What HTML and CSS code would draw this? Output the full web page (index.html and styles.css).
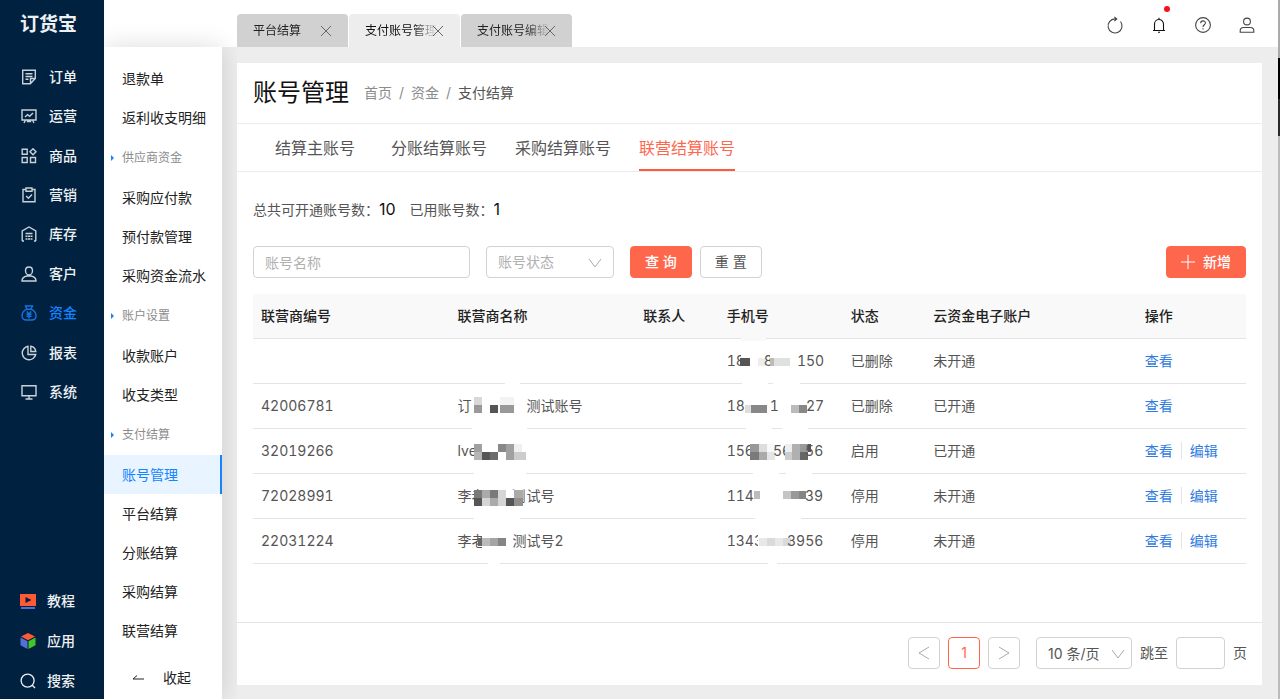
FILE: index.html
```html
<!DOCTYPE html>
<html lang="zh-CN">
<head>
    <meta charset="UTF-8">
    <meta name="viewport" content="width=device-width, initial-scale=1.0">
    <title>账号管理</title>
    <link rel="stylesheet" href="styles.css">
</head>
<body>
    <div class="app">
        <aside class="sidebar">
            <a class="logo" href="#">订货宝</a>
            <ul class="nav">
                <li><a href="#"><svg viewBox="0 0 16 16"><path d="M14.3 9.5V1.2H1.7v13.6h7.6zM14.3 9.5H9.5v5M4.5 4.7h7M4.5 7.5h7M4.5 10.3h3"/></svg>订单</a></li>
                <li><a href="#"><svg viewBox="0 0 16 16"><path d="M1 2h14v10H1zM4 9l2.6-2.4 2 1.6L12 5M4.5 12 3 15M11.5 12l1.5 3M6.5 12v1.5h3V12"/></svg>运营</a></li>
                <li><a href="#"><svg viewBox="0 0 16 16"><path d="M1.2 1.2h5v5h-5zM1.2 9.5h5v5h-5zM9.5 9.5h5v5h-5zM12 .8l3 3-3 3-3-3z"/></svg>商品</a></li>
                <li><a href="#"><svg viewBox="0 0 16 16"><path d="M5 2.5H2v12.3h12V2.5h-3M5 1h6v3.2H5zM5.2 9l2.2 2.2L11 7.5"/></svg>营销</a></li>
                <li><a href="#"><svg viewBox="0 0 16 16"><path d="M1.2 15V5L8 1l6.800 4v10M1 15h2M13 15h2M4.500 7.500h7M4.500 10.300h2M7 10.300h2M9.500 10.300h2M4.500 13h2M7 13h2M9.500 13h2"/></svg>库存</a></li>
                <li><a href="#"><svg viewBox="0 0 16 16"><path d="M8 1c2.200 0 3.500 1.600 3.500 3.700S10 9 8 9 4.500 6.800 4.500 4.700 5.800 1 8 1zM1 15c0-3 2.200-4.500 5-5h4c2.800.5 5 2 5 5z"/></svg>客户</a></li>
                <li class="active"><a href="#"><svg viewBox="0 0 16 16"><path d="M4.500 1h7l-1.500 3.200C13 5.500 15 8 15 10.700c0 3-2 4.300-4.500 4.300h-5C3 15 1 13.700 1 10.700 1 8 3 5.500 6 4.200zM6 4.200h4M5.800 6.500 8 9l2.200-2.500M5.500 9.200h5M5.500 11.300h5M8 9v4.500"/></svg>资金</a></li>
                <li><a href="#"><svg viewBox="0 0 16 16"><path d="M7 1.300a6.800 6.800 0 1 0 7.700 8.200H7zM9.800 1.200a6 6 0 0 1 5 5.300h-5z"/></svg>报表</a></li>
                <li><a href="#"><svg viewBox="0 0 16 16"><path d="M1 1.800h14v10H1zM8 12v2.500M4.500 15h7"/></svg>系统</a></li>
            </ul>
            <ul class="tools">
                <li><a href="#"><svg class="solid" viewBox="0 0 16 16"><path fill="#ff5a36" d="M0 1h16v12H0z"/><path fill="#00213f" d="m5.500 4 6 3-6 3z"/><path fill="#4e6fd0" d="M1 14h14v2H1z"/></svg>教程</a></li>
                <li><a href="#"><svg class="solid" viewBox="0 0 16 16"><path fill="#ff5a36" d="m8 0 7 3.500-7 3.700-7-3.700z"/><path fill="#5470d8" d="m.5 4.500 7 3.700V16l-7-3.800z"/><path fill="#43c428" d="m15.500 4.500-7 3.700V16l7-3.800z"/></svg>应用</a></li>
                <li><a href="#"><svg viewBox="0 0 16 16"><circle cx="7.600" cy="7.600" r="6.500"/><path d="m12.300 12.300 2.700 2.700"/></svg>搜索</a></li>
            </ul>
        </aside>

        <aside class="submenu">
            <ul>
                <li><a href="#">退款单</a></li>
                <li><a href="#">返利收支明细</a></li>
                <li class="group">供应商资金</li>
                <li><a href="#">采购应付款</a></li>
                <li><a href="#">预付款管理</a></li>
                <li><a href="#">采购资金流水</a></li>
                <li class="group">账户设置</li>
                <li><a href="#">收款账户</a></li>
                <li><a href="#">收支类型</a></li>
                <li class="group">支付结算</li>
                <li class="active"><a href="#">账号管理</a></li>
                <li><a href="#">平台结算</a></li>
                <li><a href="#">分账结算</a></li>
                <li><a href="#">采购结算</a></li>
                <li><a href="#">联营结算</a></li>
            </ul>
            <button type="button" class="collapse"><svg viewBox="0 0 12 12"><path d="M12 7H1l4-3.500"/></svg>收起</button>
        </aside>

        <div class="main">
            <header class="topbar">
                <div class="page-tabs">
                    <div class="page-tab"><a href="#">平台结算</a><button type="button" aria-label="关闭"><svg viewBox="0 0 12 12"><path d="m1 1 10 10M11 1 1 11"/></svg></button></div>
                    <div class="page-tab current"><a href="#">支付账号管理</a><button type="button" aria-label="关闭"><svg viewBox="0 0 12 12"><path d="m1 1 10 10M11 1 1 11"/></svg></button></div>
                    <div class="page-tab"><a href="#">支付账号编辑</a><button type="button" aria-label="关闭"><svg viewBox="0 0 12 12"><path d="m1 1 10 10M11 1 1 11"/></svg></button></div>
                </div>
                <div class="actions">
                    <button type="button" aria-label="刷新"><svg viewBox="0 0 16 16"><path d="M13.500 4.500A7 7 0 1 1 8 1.900h1.500M7.300-.2l2.500 2.100-2.500 2.200"/></svg></button>
                    <button type="button" class="bell" aria-label="消息"><svg viewBox="0 0 16 16"><path d="M3.500 13.500V7a4.500 4.500 0 0 1 9 0v6.500M2 13.500h12M8 .8v1.700M7 15.300h2"/></svg><span class="dot"></span></button>
                    <button type="button" aria-label="帮助"><svg viewBox="0 0 16 16"><circle cx="8" cy="8" r="7.400"/><path d="M5.700 6.300C5.700 3 10.400 3.200 10.400 6c0 1.800-2.400 1.800-2.400 4M8 11.300v1.200"/></svg></button>
                    <button type="button" aria-label="我的"><svg viewBox="0 0 16 16"><circle cx="8" cy="4.500" r="3.400"/><path d="M1.200 15.200v-1.500c0-2 1.500-3.200 3.500-3.200h6.600c2 0 3.500 1.200 3.500 3.200v1.500z"/></svg></button>
                </div>
            </header>

            <main class="card">
                <div class="card-head">
                    <h1>账号管理</h1>
                    <nav class="breadcrumb"><a href="#">首页</a><span>/</span><a href="#">资金</a><span>/</span><b>支付结算</b></nav>
                </div>
                <nav class="tabs">
                    <a href="#">结算主账号</a>
                    <a href="#">分账结算账号</a>
                    <a href="#">采购结算账号</a>
                    <a href="#" class="active">联营结算账号</a>
                </nav>
                <div class="content">
                    <p class="summary"><span>总共可开通账号数：<b>10</b></span><span>已用账号数：<b>1</b></span></p>

                    <form class="filter">
                        <input class="field name" type="text" placeholder="账号名称" aria-label="账号名称">
                        <div class="select status">
                            <select class="field" aria-label="账号状态">
                                <option value="">账号状态</option>
                                <option>启用</option>
                                <option>停用</option>
                                <option>已删除</option>
                            </select>
                            <svg viewBox="0 0 14 14"><path d="m1 3 6 8 6-8"/></svg>
                        </div>
                        <button type="button" class="btn primary">查 询</button>
                        <button type="button" class="btn">重 置</button>
                        <button type="button" class="btn primary add"><svg viewBox="0 0 14 14"><path d="M7 0v14M0 7h14"/></svg>新增</button>
                    </form>

                    <table>
                        <colgroup>
                            <col class="c-code"><col class="c-name"><col class="c-contact"><col class="c-phone"><col class="c-state"><col class="c-fund"><col class="c-action">
                        </colgroup>
                        <thead>
                            <tr><th>联营商编号</th><th>联营商名称</th><th>联系人</th><th>手机号</th><th>状态</th><th>云资金电子账户</th><th>操作</th></tr>
                        </thead>
                        <tbody>
                            <tr>
                                <td></td>
                                <td></td>
                                <td></td>
                                <td>18<svg class="mask" width="19" height="16"><path fill="#fff" d="M-4-6h24v28H-4zM-3 28h26v4H-3z"/><path fill="#f9f9f9" d="M-4-17h25v4H-4z"/><path fill="#555" d="M-5 4h10v8H-5z"/><path fill="#ededed" d="M13 4h7v8h-7z"/></svg>8<svg class="mask" width="24" height="16"><path fill="#fff" d="M-3-6h26v28H-3zM0 28h27v4H0z"/><path fill="#bbb" d="M-3 4h4v8h-4z"/><path fill="#e0e0e0" d="M1 4h16v8H1z"/></svg>150</td>
                                <td>已删除</td>
                                <td>未开通</td>
                                <td><a href="#">查看</a></td>
                            </tr>
                            <tr>
                                <td>42006781</td>
                                <td>订<svg class="mask" width="55" height="16"><path fill="#fff" d="M0 28h55v4H0zM33-17h15v4H33z"/><path fill="#d8d8d8" d="M2-2h8v8H2z"/><path fill="#999" d="M2 6h8v8H2zM28 6h14v8H28z"/><path fill="#555" d="M18 6h8v8h-8z"/><path fill="#f3f3f3" d="M28-2h14v8H28z"/></svg>测试账号</td>
                                <td></td>
                                <td>18<svg class="mask" width="25" height="16"><path fill="#fff" d="M1 28h26v4H1z"/><path fill="#ddd" d="M0 6h6v8H0z"/><path fill="#888" d="M6 6h16v8H6z"/></svg>1<svg class="mask" width="27" height="16"><path fill="#fff" d="M3 28h26v4H3z"/><path fill="#bbb" d="M12 6h8v8h-8z"/><path fill="#888" d="M20 6h8v8h-8z"/></svg>27</td>
                                <td>已删除</td>
                                <td>已开通</td>
                                <td><a href="#">查看</a></td>
                            </tr>
                            <tr>
                                <td>32019266</td>
                                <td>lve<svg class="mask" width="50" height="16"><path fill="#fff" d="M-3 0h52v16H-3zM-3 28h52v4H-3z"/><path fill="#a0a0a0" d="M-3 0h8v8h-8zM29 0h8v16h-8z"/><path fill="#b5b5b5" d="M-3 8h8v8h-8z"/><path fill="#555" d="M5 8h8v8H5z"/><path fill="#6c6c6c" d="M13 8h8v8h-8z"/><path fill="#888" d="M21 0h8v8h-8z"/><path fill="#f0f0f0" d="M37 0h8v8h-8z"/><path fill="#ccc" d="M37 8h12v8H37z"/></svg></td>
                                <td></td>
                                <td>156<svg class="mask" width="19" height="16"><path fill="#fff" d="M-1 28h26v4H-1z"/><path fill="#999" d="M-4 0h9v8h-9z"/><path fill="#7a7a7a" d="M-4 8h9v8h-9z"/><path fill="#ddd" d="M5 0h8v8H5z"/><path fill="#aaa" d="M5 8h8v8H5z"/><path fill="#f8f8f8" d="M13 0h8v8h-8z"/><path fill="#e5e5e5" d="M13 8h8v8h-8z"/></svg>56<svg class="mask" width="14" height="16"><path fill="#fff" d="M-5 28h26v4H-5z"/><path fill="#eee" d="M-6 0h7v8h-7z"/><path fill="#ccc" d="M-6 8h7v8h-7z"/><path fill="#b0b0b0" d="M1 0h8v16H1z"/><path fill="#999" d="M9 0h8v8H9z"/><path fill="#666" d="M9 8h8v8H9z"/><path fill="#555" d="M17 0h3v8h-3z"/></svg>56</td>
                                <td>启用</td>
                                <td>已开通</td>
                                <td><a href="#">查看</a><a href="#">编辑</a></td>
                            </tr>
                            <tr>
                                <td>72028991</td>
                                <td>李老<svg class="mask" width="26" height="16"><path fill="#fff" d="M-12 1h36v16h-36zM-12 28h46v4h-46z"/><path fill="#7a7a7a" d="M-12 1h8v8h-8zM4 1h8v8H4z"/><path fill="#aaa" d="M-4 1h8v8h-8zM4 9h8v8H4z"/><path fill="#d5d5d5" d="M12 1h8v16h-8zM-4 9h8v8h-8z"/><path fill="#555" d="M-12 9h8v8h-8z"/></svg>测<svg class="mask" width="1" height="16"><path fill="#fff" d="M-20 1h8v8h-8z"/><path fill="#aaa" d="M-12 1h9v8h-9z"/><path fill="#555" d="M-20 9h8v8h-8z"/><path fill="#909090" d="M-12 9h9v8h-9z"/></svg>试号</td>
                                <td></td>
                                <td>114<svg class="mask" width="51" height="16"><path fill="#fff" d="M1 28h46v4H1z"/><path fill="#bbb" d="M0 2h6v8H0z"/><path fill="#c5c5c5" d="M29 2h8v8h-8z"/><path fill="#999" d="M37 2h8v8h-8z"/><path fill="#858585" d="M45 2h7v8h-7z"/></svg>39</td>
                                <td>停用</td>
                                <td>未开通</td>
                                <td><a href="#">查看</a><a href="#">编辑</a></td>
                            </tr>
                            <tr>
                                <td>22031224</td>
                                <td>李老<svg class="mask" width="27" height="16"><path fill="#fff" d="M-4 0h24v16H-4zM2 28h12v4H2z"/><path fill="#666" d="M-8 4h4v8h-4z"/><path fill="#bbb" d="M-4 4h8v8h-8z"/><path fill="#a5a5a5" d="M4 4h8v8H4z"/><path fill="#858585" d="M12 4h8v8h-8z"/></svg>测试号2</td>
                                <td></td>
                                <td>1343<svg class="mask" width="24" height="16"><path fill="#fff" d="M-5 0h32v16H-5zM5 28h9v4H5z"/><path fill="#e8e8e8" d="M-4 4h8v8h-8zM12 4h8v8h-8z"/><path fill="#dadada" d="M4 4h8v8H4zM20 4h8v8h-8z"/></svg>3956</td>
                                <td>停用</td>
                                <td>未开通</td>
                                <td><a href="#">查看</a><a href="#">编辑</a></td>
                            </tr>
                        </tbody>
                    </table>
                </div>
                <footer class="pager">
                    <button type="button" class="page" aria-label="上一页"><svg viewBox="0 0 14 14"><path d="M12 1 2 7l10 6"/></svg></button>
                    <button type="button" class="page current">1</button>
                    <button type="button" class="page" aria-label="下一页"><svg viewBox="0 0 14 14"><path d="m2 1 10 6-10 6"/></svg></button>
                    <div class="select size">
                        <select class="field" aria-label="每页条数">
                            <option>10 条/页</option>
                            <option>20 条/页</option>
                            <option>50 条/页</option>
                        </select>
                        <svg viewBox="0 0 14 14"><path d="m1 3 6 8 6-8"/></svg>
                    </div>
                    <label for="jump">跳至</label>
                    <input class="field jump" type="text" id="jump">
                    <span>页</span>
                </footer>
            </main>
        </div>
        <div class="edge"></div>
    </div>
</body>
</html>
```
FILE: styles.css
```css
* {
    box-sizing: border-box;
}
body {
    margin: 0;
    font-family: Inter, "Noto Sans CJK SC", sans-serif;
    font-size: 14px;
    line-height: 20px;
    color: #555;
    background: #ededed;
}
ul, h1, p {
    margin: 0;
    padding: 0;
    list-style: none;
}
a {
    color: inherit;
    text-decoration: none;
}
button, input, select {
    font: inherit;
    color: inherit;
}
button {
    padding: 0;
    border: none;
    background: none;
    cursor: pointer;
}
svg {
    width: 16px;
    height: 16px;
    flex: none;
    fill: none;
    stroke: currentColor;
}
.app {
    display: flex;
    min-height: 100vh;
}

/* dark sidebar */
.sidebar {
    display: flex;
    flex-direction: column;
    flex: none;
    width: 104px;
    color: #eef1f4;
    background: #00213f;
}
.logo {
    padding: 15px 0 22px 20px;
    font-size: 19px;
    font-weight: 700;
}
.nav {
    display: flex;
    flex-direction: column;
    height: 355px;
}
.nav li {
    flex: 1;
}
.nav a, .tools a {
    display: flex;
    align-items: center;
    height: 100%;
    padding-left: 21px;
    gap: 12px;
    font-weight: 500;
}
.nav svg {
    stroke-width: 1.4;
    opacity: .85;
}
.nav .active {
    color: #1683ff;
}
.tools {
    display: flex;
    flex-direction: column;
    gap: 4px;
    margin-top: auto;
}
.tools li {
    height: 36px;
}
.tools a {
    padding-left: 20px;
    gap: 11px;
}
.tools svg {
    stroke-width: 1.3;
}
.tools .solid {
    stroke: none;
}

/* second level menu */
.submenu {
    position: relative;
    z-index: 1;
    display: flex;
    flex-direction: column;
    justify-content: space-between;
    flex: none;
    width: 118px;
    margin-top: 47px;
    padding-top: 12px;
    color: #222;
    background: #fff;
    box-shadow: 0 0 24px rgba(0, 0, 0, .14);
    clip-path: inset(-30px -15px 0 0);
}
.submenu li {
    height: 39px;
    padding-left: 18px;
    line-height: 39px;
    white-space: nowrap;
}
.submenu a {
    display: block;
}
.submenu .group {
    display: flex;
    align-items: center;
    gap: 8px;
    height: 41px;
    padding-left: 7px;
    font-size: 12px;
    color: #8c8c8c;
}
.group::before {
    content: "";
    border: 3px solid transparent;
    border-left-color: #1683ff;
    border-right: none;
}
.submenu .active {
    color: #1683ff;
    background: #e8f4ff;
    border-right: 2px solid #1683ff;
}
.collapse {
    display: flex;
    align-items: center;
    gap: 19px;
    height: 42px;
    padding-left: 28px;
}
.collapse svg {
    width: 12px;
    height: 12px;
}

/* top bar */
.main {
    display: flex;
    flex-direction: column;
    flex: 1;
    min-width: 0;
    margin-left: -118px;
}
.topbar {
    display: flex;
    justify-content: space-between;
    align-items: flex-end;
    height: 47px;
    padding: 0 23px 0 133px;
    background: #fff;
}
.page-tabs {
    display: flex;
    gap: 1px;
}
.page-tab {
    display: flex;
    align-items: center;
    width: 111px;
    height: 33px;
    padding: 0 16px;
    font-size: 12px;
    color: #222;
    background: #d1d1d1;
    border-radius: 4px 4px 0 0;
}
.page-tab.current {
    color: #111;
    background: #ededed;
}
.page-tab a {
    flex: 1;
    overflow: hidden;
    white-space: nowrap;
    -webkit-mask-image: linear-gradient(90deg, #000 48px, transparent 72px);
    mask-image: linear-gradient(90deg, #000 48px, transparent 72px);
}
.page-tab button {
    display: flex;
    margin-left: -4px;
    color: #666;
}
.page-tab svg {
    width: 12px;
    height: 12px;
}
.actions {
    display: flex;
    gap: 28px;
    height: 100%;
    align-items: center;
    color: #444;
}
.actions button {
    position: relative;
    display: flex;
    padding-top: 2px;
}
.actions svg {
    stroke-width: 1.1;
    overflow: visible;
}
.actions .bell {
    color: #111;
}
.dot {
    position: absolute;
    top: -9px;
    right: -3px;
    width: 6px;
    height: 6px;
    border-radius: 50%;
    background: #f5111d;
}

/* card */
.card {
    display: flex;
    flex-direction: column;
    flex: 1;
    margin: 16px 16px 14px 133px;
    background: #fff;
}
.card-head {
    display: flex;
    align-items: center;
    gap: 15px;
    height: 61px;
    padding: 0 16px;
    border-bottom: 1px solid #ececec;
}
h1 {
    font-size: 24px;
    font-weight: 400;
    line-height: 32px;
    color: #111;
}
.breadcrumb {
    display: flex;
    gap: 7px;
    color: #8c8c8c;
}
.breadcrumb b {
    font-weight: 400;
    color: #555;
}
.tabs {
    display: flex;
    gap: 28px;
    height: 48px;
    padding: 0 30px;
    border-bottom: 1px solid #ececec;
    font-size: 16px;
    line-height: 48px;
    text-align: center;
}
.tabs a {
    min-width: 96px;
}
.tabs .active {
    color: #ff674d;
    border-bottom: 2px solid #ff5a3c;
}
.content {
    flex: 1;
    padding: 27px 16px;
}
.summary {
    display: flex;
    gap: 14px;
}
.summary b {
    font-size: 16px;
    font-weight: 400;
    color: #111;
}
.filter {
    display: flex;
    gap: 8px;
    margin: 26px 0 16px;
}
.field {
    width: 100%;
    height: 32px;
    padding: 0 11px;
    border: 1px solid #d2d2d2;
    border-radius: 4px;
    background: #fff;
    appearance: none;
}
.field::placeholder {
    color: #b0b0b0;
    opacity: 1;
}
.name {
    width: 217px;
    margin-right: 8px;
}
.select {
    position: relative;
}
.select svg {
    position: absolute;
    top: 10px;
    right: 12px;
    width: 14px;
    height: 14px;
    color: #aaa;
    pointer-events: none;
}
.status {
    width: 128px;
    margin-right: 8px;
}
.status select {
    color: #b0b0b0;
}
.btn {
    height: 32px;
    padding: 0 14px;
    border: 1px solid #d2d2d2;
    border-radius: 4px;
    background: #fff;
}
.btn.primary {
    color: #fff;
    font-weight: 500;
    background: #ff674d;
    border-color: #ff674d;
}
.btn.add {
    display: flex;
    align-items: center;
    gap: 8px;
    margin-left: auto;
}
.btn svg {
    width: 14px;
    height: 14px;
}

table {
    width: 100%;
    table-layout: fixed;
    border-spacing: 0;
}
tbody {
    font-variant-numeric: tabular-nums;
}
.c-code { width: 19.8%; }
.c-name { width: 18.7%; }
.c-contact { width: 8.4%; }
.c-phone { width: 12.5%; }
.c-state { width: 8.3%; }
.c-fund { width: 21.3%; }
.c-action { width: 11%; }
th, td {
    height: 45px;
    padding: 0 8px;
    border-bottom: 1px solid #e4e4e4;
    text-align: left;
    white-space: nowrap;
}
th {
    font-weight: 500;
    color: #222;
    background: #f9f9f9;
}
td a {
    color: #2f7be0;
}
td a + a {
    margin-left: 8px;
    padding-left: 8px;
    border-left: 1px solid #e4e4e4;
}
.mask {
    width: auto;
    overflow: visible;
    stroke: none;
    vertical-align: middle;
}

.pager {
    display: flex;
    justify-content: flex-end;
    gap: 8px;
    padding: 14px 15px 15px;
    border-top: 1px solid #e4e4e4;
    line-height: 32px;
}
.page {
    display: flex;
    align-items: center;
    justify-content: center;
    width: 32px;
    height: 32px;
    border: 1px solid #d2d2d2;
    border-radius: 4px;
    color: #aaa;
}
.page svg {
    width: 14px;
    height: 14px;
}
.page.current {
    color: #ff674d;
    border-color: #ff674d;
}
.size {
    width: 96px;
    margin-left: 8px;
}
.size svg {
    right: 7px;
}
.jump {
    width: 49px;
}

.edge {
    flex: none;
    width: 2px;
    background: linear-gradient(#aaa 58px, #000 58px, #000 99px, #2a2a2a 99px, #2a2a2a 136px, #bbb 136px);
}
```
